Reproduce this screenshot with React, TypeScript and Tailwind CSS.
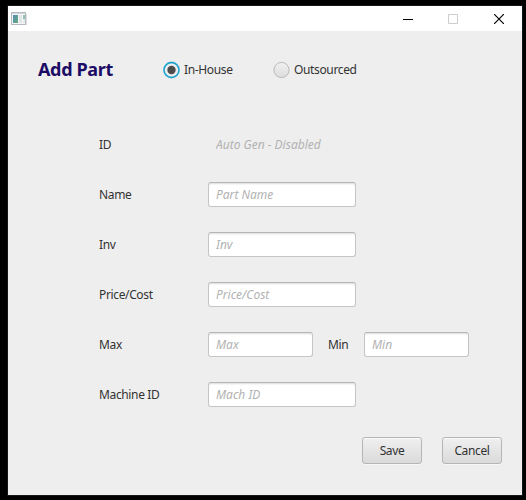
import React from "react";

const text = "text-[12px] leading-[16px] tracking-[-0.36px] whitespace-nowrap text-[#333333]";

function Field({ placeholder, width, disabled }: { placeholder: string; width: string; disabled?: boolean }) {
  const frame = disabled
    ? "border-transparent bg-transparent"
    : "border-[#c4c5c5] border-t-[#b4b5b5] bg-white shadow-[inset_0_2px_2px_-1px_#dcdcdc]";
  return (
    <input
      disabled={disabled}
      placeholder={placeholder}
      className={`h-[25px] rounded-[3px] border px-[7px] pb-px text-[12px] italic outline-none placeholder:text-[#b2b2b2] ${frame} ${width}`}
    />
  );
}

function Row({ label, children }: { label: string; children: React.ReactNode }) {
  return (
    <div className="flex h-[25px] items-center">
      <span className={`w-[109px] ${text}`}>{label}</span>
      {children}
    </div>
  );
}

function Radio({ label, selected }: { label: string; selected?: boolean }) {
  return (
    <label className="flex h-[18px] items-center gap-1">
      <svg width="17" height="18" viewBox="0 0 17 18">
        <defs>
          <linearGradient id="radio-face" x1="0" y1="0" x2="0" y2="1">
            <stop stopColor="#f0f0f0" />
            <stop offset="1" stopColor="#dddddd" />
          </linearGradient>
        </defs>
        {selected ? (
          <>
            <circle cx="8.5" cy="9" r="7.5" fill="#eeeeee" stroke="#9fd6ea" strokeWidth="2" />
            <circle cx="8.5" cy="9" r="7.5" fill="none" stroke="#1ba0cc" strokeWidth="1.3" />
            <circle cx="8.5" cy="9" r="4.2" fill="#4c4c4c" />
          </>
        ) : (
          <circle cx="8.5" cy="9" r="7.6" fill="url(#radio-face)" stroke="#b9b9b9" />
        )}
      </svg>
      <span className={text}>{label}</span>
    </label>
  );
}

function Button({ label }: { label: string }) {
  return (
    <button className={`h-[27px] w-[60px] rounded-[3px] border border-[#b5b5b5] bg-linear-to-b from-[#f0f0f0] to-[#dadada] shadow-[inset_0_1px_0_#fafafa,0_1px_0_#f6f6f6] ${text}`}>
      {label}
    </button>
  );
}

export default function App() {
  return (
    <div className="h-[500px] w-[526px] overflow-hidden bg-black pl-2 pt-1.5 font-['Noto_Sans','Open_Sans',sans-serif]">
      <div className="h-[489px] w-[514px] bg-[#eeeeee] shadow-[0_0_0_1px_#161616]">
        <header className="flex h-[25px] items-center justify-between bg-white pl-[3px] pr-[18px]">
          <svg width="16" height="14" viewBox="0 0 16 14" shapeRendering="crispEdges">
            <defs>
              <linearGradient id="pane" x1="0" y1="0" x2="1" y2="1">
                <stop stopColor="#568cb8" />
                <stop offset="1" stopColor="#63ad78" />
              </linearGradient>
            </defs>
            <path d="M0 0h15v13H0z" fill="#b4b9bf" />
            <path d="M1 1h13v1H1z" fill="#d4d8dd" />
            <path d="M1 2h13v10H1z" fill="#f7f7f7" />
            <path d="M2 3h5v8H2z" fill="url(#pane)" />
            <path d="M8 3h3v8H8z" fill="#e1e4e7" />
            <path d="M12 3h2v4h-2z" fill="#91c0b5" />
            <path d="M12 7h2v4h-2z" fill="#e3ebe6" />
            <path d="M1 13h15V2h-1v11z" fill="#dedede" />
          </svg>
          <div className="flex items-center">
            <svg className="mr-[35px]" width="10" height="10" viewBox="0 0 10 10" shapeRendering="crispEdges">
              <path d="M0 5h10v1H0z" fill="#000" />
            </svg>
            <svg className="mr-[36px]" width="10" height="10" viewBox="0 0 10 10">
              <path d="M.5.5h9v9h-9z" fill="none" stroke="#cccccc" />
            </svg>
            <svg width="10" height="10" viewBox="0 0 10 10">
              <path d="M0 0l10 10M10 0L0 10" fill="none" stroke="#000" strokeWidth="1.15" />
            </svg>
          </div>
        </header>
        <main className="pt-[30px]">
          <div className="flex h-[18px] items-center pl-[30px]">
            <h1 className="w-[125px] whitespace-nowrap pb-0.5 text-[18px] font-bold leading-[24px] tracking-[-0.35px] text-[#1c0c65]">Add Part</h1>
            <div className="w-[110px]"><Radio label="In-House" selected /></div>
            <Radio label="Outsourced" />
          </div>
          <div className="flex flex-col gap-[25px] pl-[91px] pt-[53px]">
            <Row label="ID"><Field placeholder="Auto Gen - Disabled" width="w-[148px]" disabled /></Row>
            <Row label="Name"><Field placeholder="Part Name" width="w-[148px]" /></Row>
            <Row label="Inv"><Field placeholder="Inv" width="w-[148px]" /></Row>
            <Row label="Price/Cost"><Field placeholder="Price/Cost" width="w-[148px]" /></Row>
            <Row label="Max">
              <Field placeholder="Max" width="w-[105px]" />
              <span className={`ml-[15px] w-[36px] ${text}`}>Min</span>
              <Field placeholder="Min" width="w-[105px]" />
            </Row>
            <Row label="Machine ID"><Field placeholder="Mach ID" width="w-[148px]" /></Row>
          </div>
          <div className="flex justify-end gap-5 pr-5 pt-[30px]">
            <Button label="Save" />
            <Button label="Cancel" />
          </div>
        </main>
      </div>
    </div>
  );
}
